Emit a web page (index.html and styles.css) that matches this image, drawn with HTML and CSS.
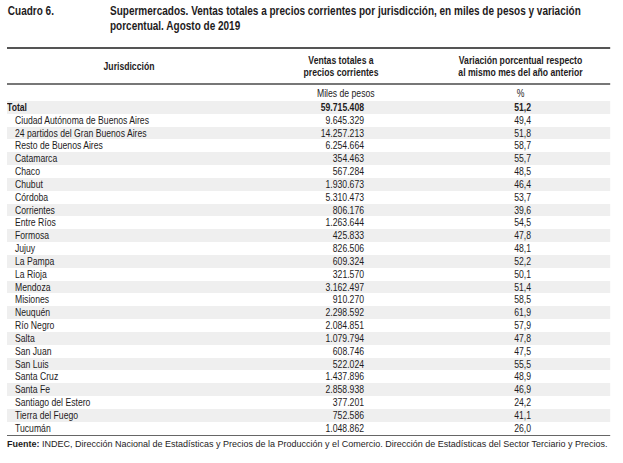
FILE: index.html
```html
<!DOCTYPE html>
<html lang="es">
<head>
<meta charset="utf-8">
<link rel="stylesheet" href="styles.css">
</head>
<body>
<div class="page">
  <div class="narrow">
    <div class="title">
      <div class="title-label">Cuadro 6.</div>
      <div class="title-text">Supermercados. Ventas totales a precios corrientes por jurisdicción, en miles de pesos y variación porcentual. Agosto de 2019</div>
    </div>
    <table class="data">
      <colgroup><col class="c1"><col class="c2"><col class="c3"></colgroup>
      <thead>
        <tr class="head">
          <th>Jurisdicción</th>
          <th>Ventas totales a<br>precios corrientes</th>
          <th>Variación porcentual respecto<br>al mismo mes del año anterior</th>
        </tr>
      </thead>
      <tbody>
        <tr class="units"><td></td><td class="u2">Miles de pesos</td><td class="u3">%</td></tr>
        <tr class="total shade"><td class="name">Total</td><td class="num">59.715.408</td><td class="pct">51,2</td></tr>
        <tr><td class="name sub">Ciudad Autónoma de Buenos Aires</td><td class="num">9.645.329</td><td class="pct">49,4</td></tr>
        <tr class="shade"><td class="name sub">24 partidos del Gran Buenos Aires</td><td class="num">14.257.213</td><td class="pct">51,8</td></tr>
        <tr><td class="name sub">Resto de Buenos Aires</td><td class="num">6.254.664</td><td class="pct">58,7</td></tr>
        <tr class="shade"><td class="name sub">Catamarca</td><td class="num">354.463</td><td class="pct">55,7</td></tr>
        <tr><td class="name sub">Chaco</td><td class="num">567.284</td><td class="pct">48,5</td></tr>
        <tr class="shade"><td class="name sub">Chubut</td><td class="num">1.930.673</td><td class="pct">46,4</td></tr>
        <tr><td class="name sub">Córdoba</td><td class="num">5.310.473</td><td class="pct">53,7</td></tr>
        <tr class="shade"><td class="name sub">Corrientes</td><td class="num">806.176</td><td class="pct">39,6</td></tr>
        <tr><td class="name sub">Entre Ríos</td><td class="num">1.263.644</td><td class="pct">54,5</td></tr>
        <tr class="shade"><td class="name sub">Formosa</td><td class="num">425.833</td><td class="pct">47,8</td></tr>
        <tr><td class="name sub">Jujuy</td><td class="num">826.506</td><td class="pct">48,1</td></tr>
        <tr class="shade"><td class="name sub">La Pampa</td><td class="num">609.324</td><td class="pct">52,2</td></tr>
        <tr><td class="name sub">La Rioja</td><td class="num">321.570</td><td class="pct">50,1</td></tr>
        <tr class="shade"><td class="name sub">Mendoza</td><td class="num">3.162.497</td><td class="pct">51,4</td></tr>
        <tr><td class="name sub">Misiones</td><td class="num">910.270</td><td class="pct">58,5</td></tr>
        <tr class="shade"><td class="name sub">Neuquén</td><td class="num">2.298.592</td><td class="pct">61,9</td></tr>
        <tr><td class="name sub">Río Negro</td><td class="num">2.084.851</td><td class="pct">57,9</td></tr>
        <tr class="shade"><td class="name sub">Salta</td><td class="num">1.079.794</td><td class="pct">47,8</td></tr>
        <tr><td class="name sub">San Juan</td><td class="num">608.746</td><td class="pct">47,5</td></tr>
        <tr class="shade"><td class="name sub">San Luis</td><td class="num">522.024</td><td class="pct">55,5</td></tr>
        <tr><td class="name sub">Santa Cruz</td><td class="num">1.437.896</td><td class="pct">48,9</td></tr>
        <tr class="shade"><td class="name sub">Santa Fe</td><td class="num">2.858.938</td><td class="pct">46,9</td></tr>
        <tr><td class="name sub">Santiago del Estero</td><td class="num">377.201</td><td class="pct">24,2</td></tr>
        <tr class="shade"><td class="name sub">Tierra del Fuego</td><td class="num">752.586</td><td class="pct">41,1</td></tr>
        <tr class="last"><td class="name sub">Tucumán</td><td class="num">1.048.862</td><td class="pct">26,0</td></tr>
      </tbody>
    </table>
  </div>
  <p class="source"><b>Fuente:</b> INDEC, Dirección Nacional de Estadísticas y Precios de la Producción y el Comercio. Dirección de Estadísticas del Sector Terciario y Precios.</p>
</div>
</body>
</html>
```

FILE: styles.css
```css
html, body {
  margin: 0;
  padding: 0;
  background: #ffffff;
}
.page {
  padding: 4px 0 0 7px;
  color: #1e1b1c;
  font-family: "Liberation Sans", Arial, sans-serif;
}
/* condensed typeface emulation: the table is set in a narrow sans */
.narrow {
  width: 753.75px;
  transform: scaleX(0.8);
  transform-origin: 0 0;
}
.title {
  display: flex;
  font-weight: bold;
  font-size: 12.5px;
  line-height: 15px;
  padding-left: 1px;
}
.title-label {
  width: 127.75px;
  flex: none;
}
.title-text {
  width: 600px;
  flex: none;
}
.data {
  margin-top: 13px;
  width: 753.75px;
  border-collapse: collapse;
  font-size: 10.8px;
  table-layout: fixed;
}
.c1 { width: 305px; }
.c2 { width: 225px; }
.c3 { width: 223.75px; }
.data th, .data td {
  padding: 0;
  white-space: nowrap;
}
.head th {
  border-top: 2px solid #555;
  border-bottom: 2px solid #777;
  font-weight: bold;
  text-align: center;
  line-height: 12.5px;
  height: 34px;
  vertical-align: middle;
}
.units td {
  height: 15px;
  vertical-align: middle;
  line-height: 13px;
  padding-top: 1px;
}
.data td.u2 {
  text-align: center;
  padding-left: 12px;
}
.data td.u3 {
  text-align: center;
}
.data tbody tr td {
  line-height: 12.83px;
}
.data tbody tr {
  height: 12.83px;
}
.shade td {
  background: #efefef;
}
.total td {
  font-weight: bold;
}
.data td.sub {
  padding-left: 10px;
}
.data td.num {
  text-align: right;
  padding-right: 83.75px;
}
.data td.pct {
  text-align: right;
  padding-right: 98.75px;
}
.last td {
  border-bottom: 1.5px solid #666;
}
.source {
  margin: 2px 0 0 0;
  font-size: 9px;
  line-height: 12px;
  color: #1e1b1c;
  white-space: nowrap;
}
```
